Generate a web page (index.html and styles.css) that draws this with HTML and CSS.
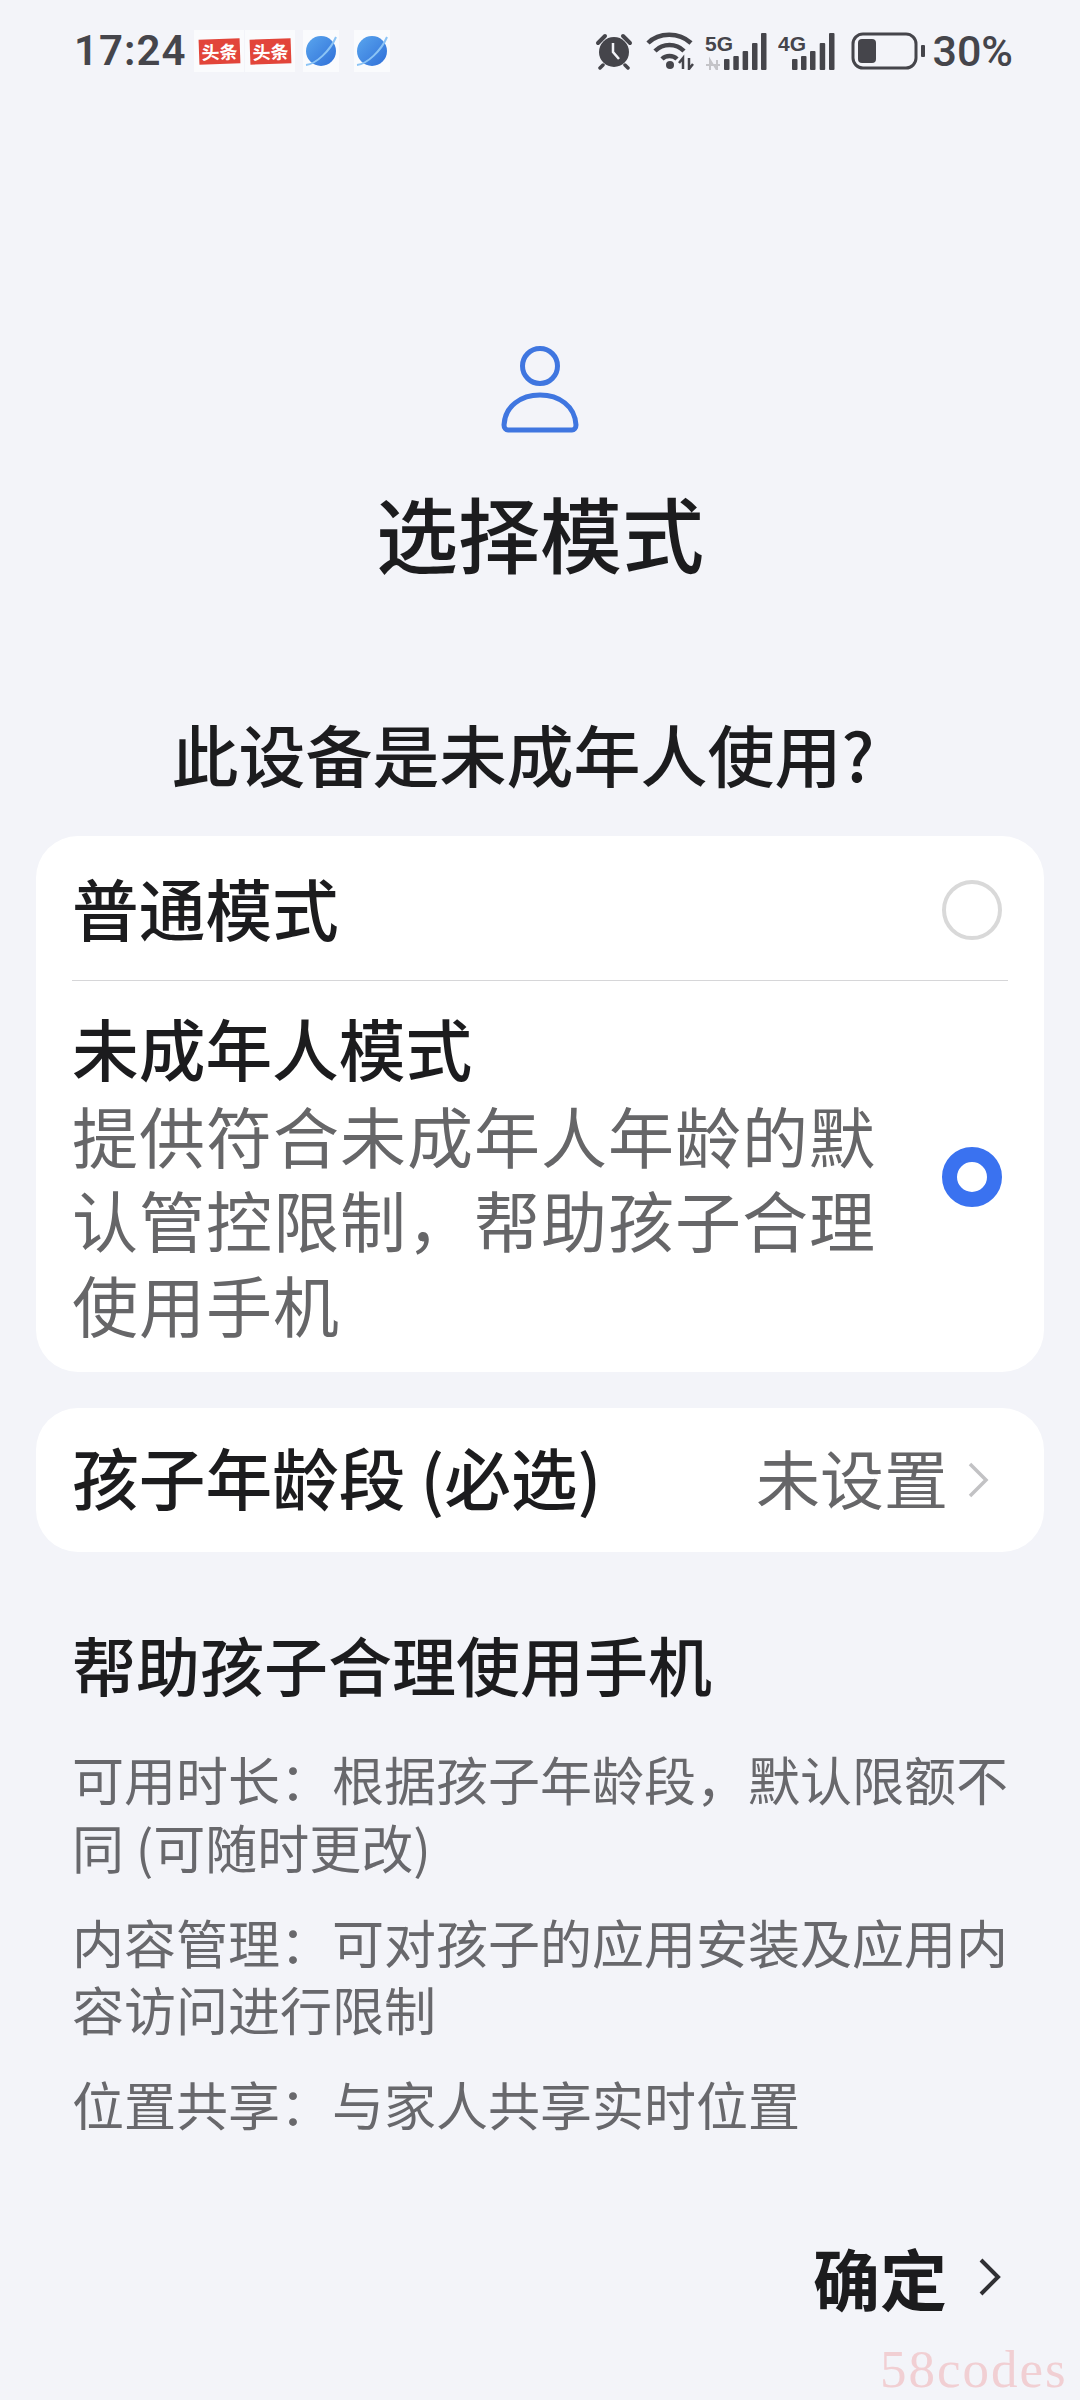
FILE: index.html
```html
<!DOCTYPE html>
<html lang="zh-CN">
<head>
<meta charset="utf-8">
<title>选择模式</title>
<link rel="stylesheet" href="styles.css">
</head>
<body>
<div class="page">
  <header class="status">
    <div class="status-left">
      <span class="time">17:24</span>
      <span class="tile"><span class="toutiao">头条</span></span>
      <span class="tile"><span class="toutiao">头条</span></span>
      <span class="tile tile-planet">
        <svg width="34" height="34" viewBox="0 0 34 34"><defs><linearGradient id="p1" x1="0" y1="0" x2="1" y2="1"><stop offset="0" stop-color="#5aa6ee"/><stop offset="1" stop-color="#2f6fd8"/></linearGradient></defs><circle cx="17" cy="17" r="15" fill="url(#p1)"/><path d="M2 31C12 30 26 17 32 3" fill="none" stroke="#8cc4f5" stroke-width="2"/></svg>
      </span>
      <span class="tile tile-planet">
        <svg width="34" height="34" viewBox="0 0 34 34"><circle cx="17" cy="17" r="15" fill="url(#p1)"/><path d="M2 31C12 30 26 17 32 3" fill="none" stroke="#8cc4f5" stroke-width="2"/></svg>
      </span>
    </div>
    <div class="status-right">
      <svg class="ic-alarm" width="38" height="38" viewBox="0 0 38 38"><circle cx="19" cy="20" r="15" fill="#45454b"/><path d="M3 11L10 4M35 11L28 4" stroke="#45454b" stroke-width="4" stroke-linecap="round"/><path d="M8 33L5 36M30 33L33 36" stroke="#45454b" stroke-width="3.5" stroke-linecap="round"/><path d="M18 11V20L24 27" fill="none" stroke="#f3f4f9" stroke-width="2.5"/></svg>
      <svg class="ic-wifi" width="48" height="38" viewBox="0 0 48 38"><path d="M2 11C13 0 33 0 45 11" fill="none" stroke="#45454b" stroke-width="4.5"/><path d="M9 19C17 11 30 11 38 19" fill="none" stroke="#45454b" stroke-width="4.5"/><path d="M16 27C20 23 27 23 31 27" fill="none" stroke="#45454b" stroke-width="4.5"/><circle cx="24" cy="33" r="4" fill="#45454b"/><path d="M37 37V26L33 31M43 26V37L47 32" fill="none" stroke="#45454b" stroke-width="2.5"/></svg>
      <svg class="ic-sig" width="62" height="38" viewBox="0 0 62 38"><text x="0" y="19" class="sig-label">5G</text><path d="M1 33H8L5 28V38M15 33H9L12 38V28" fill="none" stroke="#c4c4c8" stroke-width="2"/><rect x="19" y="27" width="5.5" height="11" rx="1" fill="#45454b"/><rect x="28.3" y="24" width="5.5" height="14" rx="1" fill="#45454b"/><rect x="37.6" y="19" width="5.5" height="19" rx="1" fill="#45454b"/><rect x="47" y="11" width="5.5" height="27" rx="1" fill="#45454b"/><rect x="56" y="1" width="5.5" height="37" rx="1" fill="#45454b"/></svg>
      <svg class="ic-sig" width="57" height="38" viewBox="0 0 57 38"><text x="0" y="19" class="sig-label">4G</text><rect x="14" y="27" width="5.5" height="11" rx="1" fill="#45454b"/><rect x="23" y="24" width="5.5" height="14" rx="1" fill="#45454b"/><rect x="32" y="19" width="5.5" height="19" rx="1" fill="#45454b"/><rect x="41.7" y="11" width="5.5" height="27" rx="1" fill="#45454b"/><rect x="51" y="1" width="5.5" height="37" rx="1" fill="#45454b"/></svg>
      <svg class="ic-batt" width="74" height="38" viewBox="0 0 74 38"><rect x="2" y="2" width="63" height="34" rx="10" fill="none" stroke="#45454b" stroke-width="3"/><rect x="7" y="7" width="18" height="24" rx="4" fill="#45454b"/><rect x="70" y="13" width="4" height="12" rx="1" fill="#45454b"/></svg>
      <span class="pct">30%</span>
    </div>
  </header>

  <section class="hero">
    <svg class="person" width="80" height="88" viewBox="0 0 80 88"><circle cx="40" cy="20" r="17.5" fill="none" stroke="#3f76e0" stroke-width="5"/><path d="M4 79C5 60 21 49 40 49C59 49 75 60 76 79C76 82 74 84 72 84H8C6 84 4 82 4 79Z" fill="none" stroke="#3f76e0" stroke-width="5"/></svg>
    <h1 class="title">选择模式</h1>
    <p class="question">此设备是未成年人使用?</p>
  </section>

  <section class="card">
    <div class="row row-plain">
      <span class="row-title">普通模式</span>
      <span class="radio"></span>
    </div>
    <div class="divider"></div>
    <div class="row row-tall">
      <div class="row-body">
        <div class="row-title">未成年人模式</div>
        <div class="row-desc">提供符合未成年人年龄的默认管控限制，帮助孩子合理使用手机</div>
      </div>
      <span class="radio radio-on"></span>
    </div>
  </section>

  <section class="card card-age">
    <span class="row-title">孩子年龄段 (必选)</span>
    <span class="age-value">未设置
      <svg class="chev" width="22" height="40" viewBox="0 0 22 40"><path d="M3 4L19 20L3 36" fill="none" stroke="#c2c2c4" stroke-width="3.5"/></svg>
    </span>
  </section>

  <section class="help">
    <h2 class="help-title">帮助孩子合理使用手机</h2>
    <p class="help-item">可用时长：根据孩子年龄段，默认限额不同 (可随时更改)</p>
    <p class="help-item">内容管理：可对孩子的应用安装及应用内容访问进行限制</p>
    <p class="help-item">位置共享：与家人共享实时位置</p>
  </section>

  <footer class="footer">
    <span class="confirm">确定</span>
    <svg width="22" height="40" viewBox="0 0 22 40"><path d="M2 3L19 20L2 37" fill="none" stroke="#303034" stroke-width="4"/></svg>
  </footer>
  <div class="watermark">58codes</div>
</div>
</body>
</html>
```
FILE: styles.css
```css
* { box-sizing: border-box; }
html, body { margin: 0; padding: 0; }
body {
  width: 1080px;
  height: 2400px;
  overflow: hidden;
  background: #f3f4f9;
  font-family: "Noto Sans CJK SC", "Noto Sans", sans-serif;
  color: #1c1c1e;
}
.page { position: relative; width: 1080px; height: 2400px; padding: 0 36px; }
p, h1, h2 { margin: 0; font-weight: 400; }

.status {
  height: 100px;
  margin: 0 -36px;
  padding: 2px 67px 0 74px;
  display: flex;
  align-items: center;
  justify-content: space-between;
}
.status-left, .status-right { display: flex; align-items: center; }
.time {
  font: 600 42px/1 Roboto, sans-serif;
  letter-spacing: 1px;
  color: #45454b;
  margin-right: 8px;
}
.tile {
  width: 50px; height: 42px;
  display: flex; align-items: center; justify-content: center;
  background: #fafbfd;
}
.tile-planet { width: 36px; margin-left: 8px; }
.tile-planet + .tile-planet { margin-left: 15px; }
.toutiao {
  width: 41px; height: 25px;
  background: #e2453a;
  color: #fff;
  font-size: 18px; line-height: 25px; font-weight: 700;
  text-align: center;
  transform: rotate(-2deg);
}
.tile + .tile:not(.tile-planet) { margin-left: 1px; }
.status-right { gap: 11px; }
.ic-alarm { margin-right: 2px; }
.sig-label { font: 700 21px "Liberation Sans", sans-serif; fill: #45454b; }
.ic-batt { margin-left: 5px; }
.pct {
  font: 500 43px/1 Roboto, sans-serif;
  color: #45454b;
  margin-left: -4px;
}

.hero { display: flex; flex-direction: column; align-items: center; padding-top: 246px; }
.title { font-size: 82px; line-height: 120px; font-weight: 500; margin-top: 38px; }
.question { font-size: 67px; line-height: 90px; font-weight: 500; margin: 116px 34px 0 0; }

.card {
  background: #fff;
  border-radius: 42px;
  margin-top: 38px;
  padding: 0 36px;
}
.row { display: flex; align-items: center; justify-content: space-between; }
.row-plain { height: 144px; }
.row-plain .row-title { margin-bottom: 2px; }
.row-plain .radio { margin-top: 3px; }
.row-title { font-size: 66.7px; line-height: 84px; font-weight: 500; color: #1c1c1e; }
.divider { height: 1px; background: #d6d6d8; }
.row-tall { height: 391px; }
.row-body { width: 810px; margin-bottom: 3px; }
.row-desc { font-size: 66px; line-height: 84.5px; color: #666668; letter-spacing: 1px; margin-top: 3px; }
.radio {
  width: 60px; height: 60px;
  border-radius: 50%;
  border: 4px solid #d9d9d9;
  margin-right: 6px;
  flex: none;
}
.radio-on { border: 15px solid #3a72f0; }

.card-age {
  margin-top: 36px;
  height: 144px;
  padding-bottom: 8px;
  display: flex;
  align-items: center;
  justify-content: space-between;
}
.age-value {
  display: flex; align-items: center; gap: 19px;
  font-size: 64px; color: #666668;
  padding-right: 19px;
}
.chev { margin-top: 8px; }

.help { padding: 0 36px; margin-top: 66px; }
.help-title { font-size: 64px; line-height: 90px; font-weight: 500; margin-bottom: 37px; }
.help-item { font-size: 52px; line-height: 67.5px; color: #68686c; margin-bottom: 27.5px; }

.footer {
  position: absolute;
  right: 79px; top: 2232px;
  display: flex; align-items: center; gap: 32px;
}
.confirm { font-size: 67px; line-height: 90px; font-weight: 700; color: #1c1c1e; }

.watermark {
  position: absolute;
  left: 880px; top: 2339px;
  font: 53px/60px "Liberation Serif", serif;
  letter-spacing: 2px;
  color: #f1cfd3;
}
```
